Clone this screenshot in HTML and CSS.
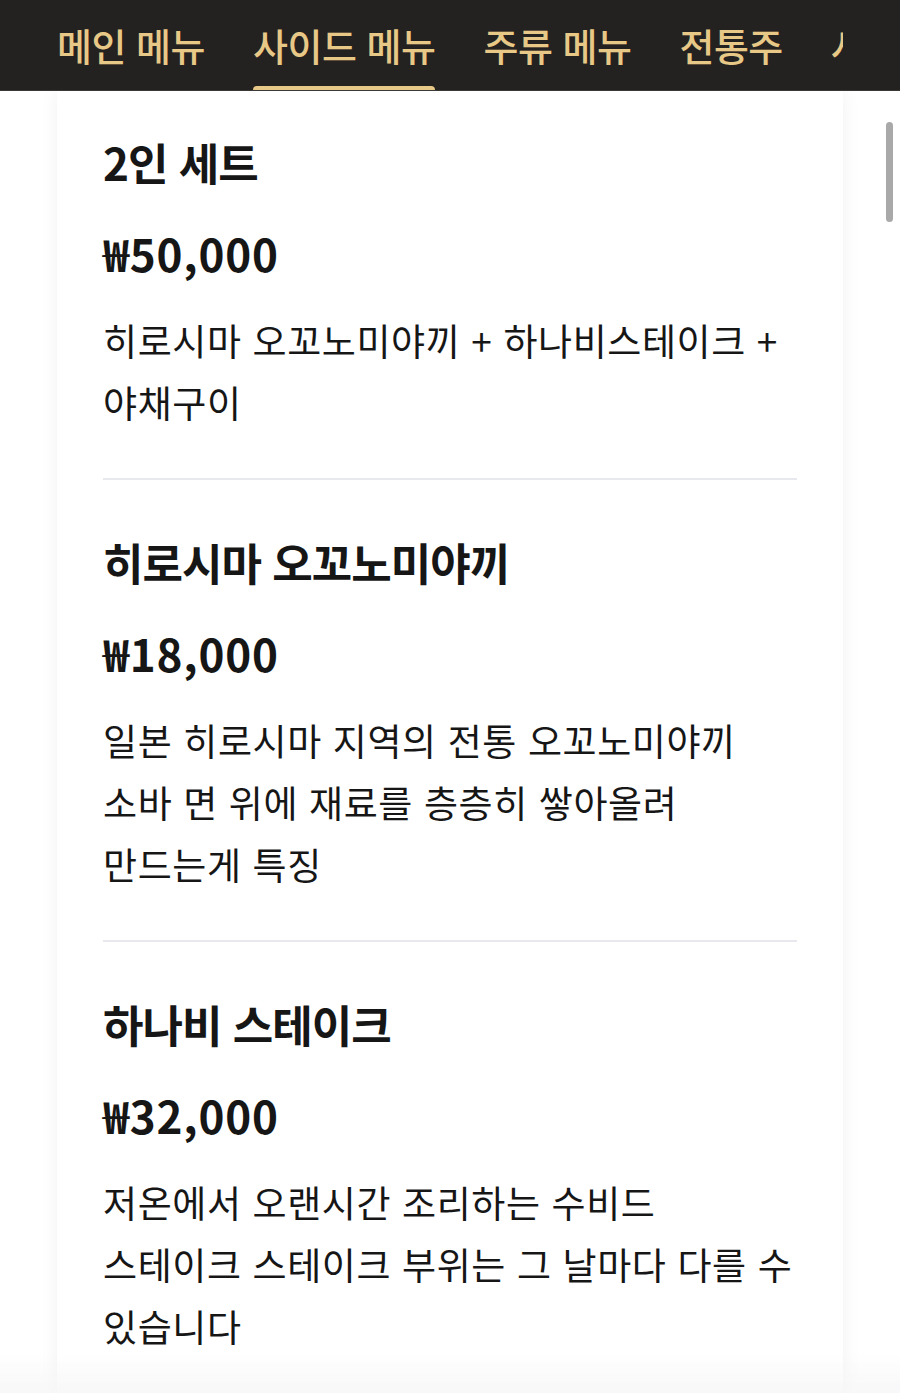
FILE: index.html
```html
<!DOCTYPE html>
<html lang="ko">
<head>
<meta charset="utf-8">
<title>사이드 메뉴</title>
<link rel="stylesheet" href="styles.css">
</head>
<body>
<header class="topbar">
  <nav class="tabs">
    <a class="tab">메인 메뉴</a>
    <a class="tab active">사이드 메뉴</a>
    <a class="tab">주류 메뉴</a>
    <a class="tab">전통주</a>
    <a class="tab">사케</a>
  </nav>
</header>
<main class="page">
  <section class="card">
    <article class="item first">
      <h3 class="name">2인 세트</h3>
      <p class="price">₩50,000</p>
      <p class="desc">히로시마 오꼬노미야끼 + 하나비스테이크 +<br>야채구이</p>
    </article>
    <article class="item">
      <h3 class="name">히로시마 오꼬노미야끼</h3>
      <p class="price">₩18,000</p>
      <p class="desc">일본 히로시마 지역의 전통 오꼬노미야끼<br>소바 면 위에 재료를 층층히 쌓아올려<br>만드는게 특징</p>
    </article>
    <article class="item">
      <h3 class="name">하나비 스테이크</h3>
      <p class="price">₩32,000</p>
      <p class="desc">저온에서 오랜시간 조리하는 수비드<br>스테이크 스테이크 부위는 그 날마다 다를 수<br>있습니다</p>
    </article>
  </section>
</main>
<div class="fade"></div>
<div class="scrollbar"></div>
</body>
</html>
```

FILE: styles.css
```css
html, body {
  margin: 0;
  padding: 0;
  background: #ffffff;
  height: 1393px;
  overflow: hidden;
}
body {
  font-family: "Noto Sans CJK KR", "Noto Sans", sans-serif;
  color: #161616;
}
.topbar {
  height: 90px;
  background: #232220;
  border-bottom: 1px solid #3a3936;
  display: flex;
  justify-content: center;
  position: relative;
  z-index: 2;
}
.tabs {
  width: 786px;
  display: flex;
  gap: 48px;
  overflow: hidden;
  white-space: nowrap;
}
.tab {
  position: relative;
  flex: none;
  color: #e8c886;
  font-size: 38px;
  font-weight: 500;
  letter-spacing: -0.5px;
  line-height: 90px;
}
.tab.active::after {
  content: "";
  position: absolute;
  left: 0;
  right: 0;
  bottom: -1px;
  height: 5px;
  background: #e8c886;
  border-radius: 4px 4px 0 0;
}
.page {
  display: flex;
  justify-content: center;
}
.card {
  width: 786px;
  min-height: 1320px;
  background: #ffffff;
  box-shadow: 0 0 18px rgba(0, 0, 0, 0.06);
  padding: 0 46px;
  box-sizing: border-box;
}
.item {
  padding: 52px 0 45px;
  border-top: 2px solid #e7e9ee;
}
.item.first {
  padding-top: 41px;
  border-top: none;
}
.name {
  margin: 0;
  font-size: 44px;
  font-weight: 700;
  line-height: 60px;
  letter-spacing: -1px;
}
.price {
  margin: 31px 0 0;
  font-size: 44px;
  font-weight: 700;
  line-height: 60px;
  letter-spacing: 0.8px;
}
.desc {
  margin: 26px 0 0;
  font-size: 37px;
  font-weight: 400;
  line-height: 62px;
  letter-spacing: 0.6px;
}
.fade {
  position: fixed;
  left: 0;
  right: 0;
  bottom: 0;
  height: 40px;
  background: linear-gradient(to bottom, rgba(250, 250, 251, 0), rgba(246, 246, 248, 0.8));
  pointer-events: none;
}
.scrollbar {
  position: fixed;
  left: 886px;
  top: 122px;
  width: 7px;
  height: 100px;
  border-radius: 4px;
  background: #a9a9a9;
}
```
